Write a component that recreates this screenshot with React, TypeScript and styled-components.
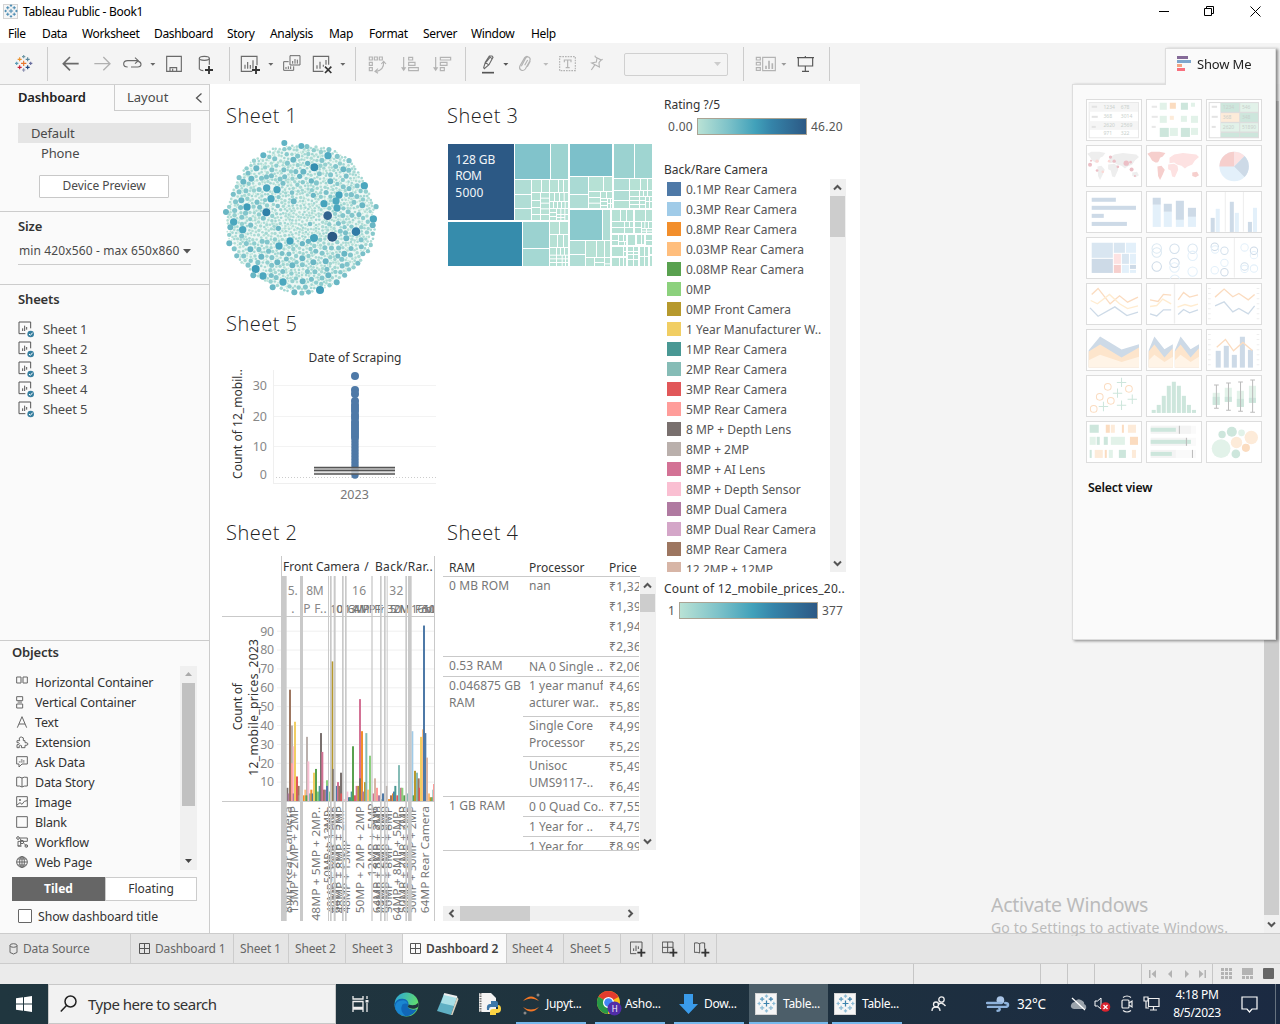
import React from 'react';
import styled, { createGlobalStyle, css } from 'styled-components';

const ui = `"Noto Sans", "Open Sans", sans-serif`;

const Global = createGlobalStyle`
  * { box-sizing: border-box; }
  body { margin: 0; background: #f4f4f4; font-family: ${ui}; overflow: hidden; }
  svg { display: block; flex: none; }
`;

/* ---------- window frame ---------- */

const Window = styled.div`
  width: 1280px; height: 1024px; display: flex; flex-direction: column;
  position: relative; overflow: hidden; background: #f4f4f4; white-space: nowrap;
`;
const TitleBar = styled.header`
  height: 22px; background: #fff; display: flex; align-items: center; padding-left: 3px;
  font-size: 12px; letter-spacing: -0.3px; color: #000;
`;
const TitleText = styled.span`margin-left: 5px; flex: 1;`;
const MenuBar = styled.nav`
  height: 22px; margin-bottom: -1px; background: #fff; display: flex; align-items: center; padding-left: 8px;
  font-size: 12px; letter-spacing: -0.35px; color: #000;
`;
const MenuItem = styled.span<{ $w: number }>`width: ${p => p.$w}px;`;
const Toolbar = styled.div`height: 41px; background: #f4f4f4; display: flex;`;
const ToolGroup = styled.div<{ $w: number }>`
  width: ${p => p.$w}px; height: 41px; display: flex; align-items: center; position: relative;
  &::after { content: ''; position: absolute; right: 0; top: 4px; width: 1px; height: 34px; background: #ccc; }
`;
const ToolSvg = styled.svg<{ $gap: number }>`margin-left: ${p => p.$gap / 3}px;`;
const FontSelect = styled.div`
  width: 104px; height: 23px; margin: 1px 0 0 21px; border: 1px solid #d0d0d0; border-radius: 2px;
  display: flex; align-items: center; justify-content: flex-end; padding-right: 5px;
`;

function Tool({ gap, x, w, children, c = '#6a6a6a' }: { gap: number; x: number; w: number; children: React.ReactNode; c?: string }) {
  return (
    <ToolSvg $gap={gap} width={w / 3} height={41} viewBox={`${x} 129 ${w} 123`} overflow="visible" fill="none" stroke={c} strokeWidth={3.4}>
      {children}
    </ToolSvg>
  );
}
function Caret({ gap, c = '#666' }: { gap: number; c?: string }) {
  return <Tool gap={gap} x={0} w={16} c="none"><path d="M1 189h15l-7.500 8z" fill={c} /></Tool>;
}

function Spark({ size, colors }: { size: number; colors: string[] }) {
  const pts = [[0, 0, 8], [0, -20, 4.5], [0, 20, 4.5], [-20, 0, 4.5], [20, 0, 4.5], [-12, -12, 6], [12, -12, 6], [-12, 12, 6], [12, 12, 6]];
  return (
    <svg width={size} height={size} viewBox="-26 -26 52 52" strokeWidth={3.4} fill="none">
      {pts.map(([x, y, r], i) => <path key={i} stroke={colors[i % colors.length]} d={`M${x - r} ${y}h${r * 2}M${x} ${y - r}v${r * 2}`} />)}
    </svg>
  );
}

const AppIcon = styled.div<{ $s: number }>`
  width: ${p => p.$s}px; height: ${p => p.$s}px; background: #f6f6f6; border: 1px solid #d4d4d4;
  display: flex; align-items: center; justify-content: center; flex: none;
`;
const WinButtons = styled.div`display: flex; gap: 35px; padding-right: 19px; height: 22px; align-items: center;`;

/* ---------- left panel ---------- */

const Body = styled.main`height: 849px; display: flex;`;
const Side = styled.aside`
  width: 210px; background: #fafafa; border-right: 1px solid #ccc; display: flex; flex-direction: column; flex: none;
  color: #4a4a4a; font-size: 12.5px; border-top: 1px solid #d0d0d0;
`;
const SideTabs = styled.div`height: 26px; display: flex;`;
const ActiveTab = styled.div`
  width: 114px; padding-left: 18px; line-height: 25px; font-weight: 600; font-size: 13px; letter-spacing: -0.15px; color: #222;
`;
const LayoutTab = styled.div`
  flex: 1; border-left: 1px solid #ccc; border-bottom: 1px solid #ccc; padding: 0 6px 0 12px; line-height: 25px;
  display: flex; justify-content: space-between; align-items: center; font-size: 13px;
`;
const DeviceBox = styled.div`height: 100px; padding: 12px 18px 0; `;
const Device = styled.div<{ $on?: boolean }>`
  height: 20px; line-height: 20px; font-size: 13px; letter-spacing: -0.15px;
  padding-left: ${p => (p.$on ? 13 : 23)}px; background: ${p => (p.$on ? '#e5e5e5' : 'transparent')};
`;
const PreviewButton = styled.div`
  margin: 12px 0 0 21px; width: 130px; height: 23px; border: 1px solid #c8c8c8; border-radius: 1px; background: #fff;
  text-align: center; line-height: 20px; font-size: 12px; letter-spacing: -0.05px;
`;
const Section = styled.section<{ $h: number }>`height: ${p => p.$h}px; border-top: 1px solid #ccc; padding: 4px 18px 0;`;
const Heading = styled.h3`margin: 0; font-size: 13px; line-height: 20px; font-weight: 600; letter-spacing: -0.15px; color: #333;`;
const SizePicker = styled.div`
  margin-top: 2px; height: 27px; line-height: 24px; border-bottom: 1px solid #ccc; font-size: 12px; letter-spacing: 0.12px; padding-left: 1px;
  display: flex; align-items: center; justify-content: space-between;
`;
const SheetList = styled.div`padding-top: 10px;`;
const SheetRow = styled.div`height: 20px; line-height: 20px; display: flex; align-items: center; gap: 8px; font-size: 13px; letter-spacing: -0.15px;`;
const Objects = styled.section`
  border-top: 1px solid #ccc; flex: 1; padding: 1px 12px 0;
`;
const ObjectsBody = styled.div`display: flex; height: 204px; justify-content: space-between; margin-top: 4px;`;
const ObjectRow = styled.div`height: 20px; display: flex; align-items: center; gap: 7px; padding-left: 4px; font-size: 12.5px; letter-spacing: -0.2px; color: #333;`;
const ObjectsList = styled.div`padding-top: 6px;`;
const Segments = styled.div`display: flex; height: 24px; margin-top: 7px; font-size: 12px; text-align: center; line-height: 22px; width: 185px; color: #333;`;
const SegOn = styled.div`width: 93px; background: #666; color: #fff; font-weight: 700; line-height: 24px;`;
const SegOff = styled.div`flex: 1; border: 1px solid #ccc; background: #fff;`;
const CheckRow = styled.div`display: flex; gap: 6px; align-items: center; height: 30px; padding-left: 6px; font-size: 12.3px; letter-spacing: -0.1px; color: #333;`;
const CheckBox = styled.span`width: 14px; height: 14px; border: 1px solid #666; border-radius: 1px; background: #fff;`;

/* ---------- scrollbars ---------- */

const Bar = styled.div<{ $w: number; $h: number; $row?: boolean }>`
  width: ${p => p.$w}px; height: ${p => p.$h}px; background: #f0f0f0; display: flex; flex: none;
  flex-direction: ${p => (p.$row ? 'row' : 'column')}; align-items: ${p => (p.$row ? 'center' : 'flex-start')}; justify-content: space-between;
`;
const Track = styled.div<{ $row?: boolean }>`
  flex: 1; display: flex; ${p => (p.$row ? css`height: 100%;` : css`width: 100%; flex-direction: column;`)}
`;
const Thumb = styled.div<{ $w: number; $h: number; $x?: number; $c?: string }>`
  width: ${p => p.$w}px; height: ${p => p.$h}px; margin-left: ${p => p.$x || 0}px; background: ${p => p.$c || '#cdcdcd'};
`;
function Chevron({ dir }: { dir: 'up' | 'down' | 'left' | 'right' }) {
  const r = { up: 0, right: 90, down: 180, left: 270 }[dir];
  const flat = dir === 'left' || dir === 'right';
  return (
    <svg width={flat ? 17 : 15} height={flat ? 15 : 17} viewBox={flat ? '-8.5 -7.5 17 15' : '-7.5 -8.5 15 17'}>
      <path transform={`rotate(${r})`} d="M-3.500 2L0-1.500L3.500 2" fill="none" stroke="#555" strokeWidth={2} />
    </svg>
  );
}

/* ---------- dashboard ---------- */

const Canvas = styled.div`width: 650px; background: #fff; display: flex; padding-left: 5px; flex: none;`;
const Col = styled.div<{ $w: number }>`width: ${p => p.$w}px; display: flex; flex-direction: column; flex: none;`;
const SheetTitle = styled.h2<{ $mt?: number; $x: number; $h?: number }>`
  margin: ${p => p.$mt || 0}px 0 0; padding-left: ${p => p.$x}px; height: ${p => p.$h || 30}px; line-height: ${p => (p.$h || 30) + 1}px;
  font-family: "Open Sans", ${ui}; font-weight: 300; font-size: 20px; letter-spacing: 0.5px; color: #222;
`;

let seed = 71;
const rnd = () => { seed = (seed * 1103515245 + 12345) % 2147483648; return seed / 2147483648; };
type Dot = [number, number, number, string];
const major: Dot[] = [
  [208, 39, 9, '#5fb3c4'], [145, 76, 9, '#5fb3c4'], [259, 48, 9, '#5fb3c4'], [339, 77, 11, '#4ea9c0'], [298, 112, 12, '#368fb0'],
  [155, 174, 11, '#4ba7be'], [186, 179, 11, '#45a3bc'], [168, 206, 11, '#4ba7be'], [96, 231, 11, '#3f9cb8'], [154, 247, 12, '#2f80a8'],
  [56, 276, 11, '#4ba7be'], [83, 299, 11, '#4ba7be'], [192, 348, 11, '#4ba7be'], [225, 333, 11, '#45a3bc'], [297, 324, 12, '#45a3bc'],
  [327, 221, 11, '#45a3bc'], [372, 195, 11, '#45a3bc'], [363, 213, 11, '#4ba7be'], [366, 234, 11, '#4ba7be'], [338, 257, 13, '#33638f'],
  [352, 320, 15, '#2c5985'], [423, 305, 13, '#2f7ba6'], [448, 167, 11, '#4ba7be'], [475, 267, 11, '#4ba7be'], [122, 417, 12, '#3f9cb8'],
  [144, 438, 11, '#4ba7be'], [204, 456, 11, '#4ba7be'], [315, 480, 12, '#3f9cb8'], [289, 153, 8, '#68b6c4'], [346, 154, 9, '#68b6c4'],
  [236, 214, 9, '#68b6c4'], [265, 125, 9, '#68b6c4'], [254, 139, 8, '#68b6c4'], [235, 89, 9, '#68b6c4'], [278, 100, 8, '#68b6c4'],
  [85, 155, 9, '#68b6c4'], [109, 146, 9, '#68b6c4'], [124, 115, 9, '#68b6c4'], [385, 118, 9, '#68b6c4'], [409, 194, 8, '#7cc1c9'],
  [43, 340, 9, '#68b6c4'], [106, 358, 9, '#68b6c4'], [139, 380, 9, '#68b6c4'], [187, 397, 9, '#68b6c4'], [232, 406, 9, '#68b6c4'],
  [262, 385, 9, '#68b6c4'], [295, 397, 9, '#68b6c4'], [332, 394, 9, '#68b6c4'], [388, 371, 9, '#68b6c4'], [340, 436, 9, '#68b6c4'],
  [263, 454, 9, '#68b6c4'], [238, 487, 9, '#68b6c4'], [173, 472, 9, '#68b6c4'], [115, 436, 9, '#68b6c4'], [365, 457, 9, '#68b6c4'],
  [33, 246, 9, '#68b6c4'], [46, 292, 9, '#68b6c4'], [79, 211, 9, '#68b6c4'], [394, 325, 9, '#68b6c4'], [442, 226, 9, '#68b6c4'],
  [483, 230, 8, '#7cc1c9'], [473, 286, 9, '#68b6c4'], [402, 92, 8, '#7cc1c9'], [262, 341, 8, '#68b6c4'], [280, 334, 8, '#68b6c4'],
  [190, 295, 8, '#68b6c4'], [295, 196, 8, '#68b6c4'], [231, 188, 7, '#7cc1c9'], [285, 282, 7, '#7cc1c9'], [188, 228, 7, '#7cc1c9'],
];
const dots: Dot[] = (() => {
  const out = [...major];
  const fill = (tries: number, r: number, inner: number, cols: string[]) => {
    for (let i = 0; i < tries; i++) {
      const a = rnd() * Math.PI * 2;
      const edge = 222 + Math.sin(a * 5) * 4;
      const d = Math.sqrt(inner * inner + rnd() * (edge * edge - inner * inner));
      const x = 257 + Math.cos(a) * d, y = 264 + Math.sin(a) * d;
      if (out.every(o => (o[0] - x) ** 2 + (o[1] - y) ** 2 > (o[2] + r - 0.4) ** 2)) out.push([x, y, r, cols[Math.floor(rnd() * cols.length)]]);
    }
  };
  fill(210, 7.6, 100, ['#78bfc8', '#81c5cb']);
  fill(260, 6.6, 85, ['#8dcdce', '#94d0cf', '#86c9cc']);
  fill(550, 5.2, 60, ['#a0d6d2', '#a8dad4']);
  fill(9000, 4, 0, ['#aadbd5', '#b2ded6', '#a2d7d3']);
  fill(9000, 2.8, 0, ['#bde5da', '#c6e9de']);
  return out;
})();

function Bubbles() {
  return (
    <svg width={225} height={180} viewBox="0 0 675 540">
      <circle cx={257} cy={264} r={216} fill="#edf7f4" />
      {dots.map(([x, y, r, c], i) => <circle key={i} cx={x} cy={y} r={r} fill={c} />)}
    </svg>
  );
}

type Box = [number, number, number, number, string?];
const L = '#b6e1d5', M = '#b0ddd5';
const tiles: Box[] = [
  [24, 42, 222, 270, '#2c5985'], [24, 276, 246, 408, '#368cac'], [225, 42, 330, 147, '#81c3cb'], [333, 42, 384, 147, '#9dd3d0'],
  [390, 42, 516, 138, '#7cc0ca'], [522, 42, 582, 144, '#9bd2d0'], [585, 42, 636, 144, '#9fd5d1'], [249, 276, 327, 354, '#9bd2d0'],
  [249, 357, 327, 408, '#a5d8d3'], [390, 240, 486, 330, '#8ac9cd'], [489, 240, 510, 330, M], [225, 150, 273, 192, M], [225, 195, 273, 234, M],
  [225, 237, 273, 270, M], [390, 141, 444, 192, '#aadad4'], [390, 195, 444, 234, M], [447, 141, 489, 183, L], [492, 141, 516, 183, L],
  [522, 147, 567, 180, M], [522, 183, 567, 210, M], [522, 213, 567, 234, L], [390, 333, 435, 372, M], [390, 375, 435, 408, M],
  [438, 333, 468, 381, L], [471, 333, 492, 381, L], [495, 333, 510, 381, L], [276, 150, 303, 186], [306, 150, 327, 186], [330, 150, 354, 186], [357, 150, 369, 186], [372, 150, 384, 186],
  [276, 189, 300, 210], [276, 213, 300, 231], [276, 234, 300, 252], [276, 255, 300, 270],
  [303, 189, 327, 203], [303, 206, 327, 218], [303, 221, 327, 235], [303, 238, 327, 252], [303, 255, 327, 270],
  [330, 189, 342, 213], [345, 189, 357, 213], [360, 189, 371, 213], [374, 189, 384, 213],
  [330, 216, 339, 234], [342, 216, 351, 234], [354, 216, 363, 234], [366, 216, 374, 234], [377, 216, 384, 234],
  [330, 237, 348, 246], [330, 249, 348, 258], [330, 261, 348, 270], [351, 237, 361, 252], [364, 237, 373, 252], [376, 237, 384, 252],
  [351, 255, 361, 261], [351, 264, 361, 270], [364, 255, 373, 261], [364, 264, 373, 270], [376, 255, 384, 270],
  [330, 276, 357, 312], [360, 276, 384, 312], [330, 315, 351, 351], [354, 315, 369, 351], [372, 315, 384, 351],
  [330, 354, 348, 374], [351, 354, 360, 374], [363, 354, 372, 374], [375, 354, 384, 374],
  [330, 377, 348, 385], [330, 388, 348, 396], [330, 399, 348, 408], [351, 377, 365, 385], [351, 388, 365, 396], [351, 399, 365, 408],
  [368, 377, 375, 385], [378, 377, 384, 385], [368, 388, 375, 396], [378, 388, 384, 396], [368, 399, 375, 408], [378, 399, 384, 408],
  [447, 186, 480, 201], [447, 204, 480, 218], [447, 221, 480, 234], [483, 186, 498, 204], [501, 186, 516, 204],
  [483, 207, 501, 213], [483, 216, 501, 225], [483, 228, 501, 234], [504, 207, 510, 219], [504, 222, 510, 234], [513, 207, 516, 219], [513, 222, 516, 234],
  [570, 147, 600, 180], [603, 147, 621, 180], [624, 147, 636, 180], [570, 183, 597, 198], [570, 201, 597, 210], [570, 213, 597, 222], [570, 225, 597, 234],
  [600, 183, 609, 198], [612, 183, 621, 198], [624, 183, 636, 198], [600, 201, 615, 210], [600, 213, 615, 222], [600, 225, 615, 234],
  [618, 201, 627, 213], [630, 201, 636, 213], [618, 216, 627, 234], [630, 216, 636, 234],
  [438, 384, 462, 408], [465, 384, 492, 396], [465, 399, 492, 408], [495, 384, 510, 400], [495, 403, 510, 408],
  [516, 240, 540, 273], [543, 240, 558, 273], [561, 240, 579, 273], [516, 276, 552, 291], [516, 294, 552, 309], [555, 276, 567, 291], [570, 276, 579, 291], [555, 294, 579, 309],
  [585, 240, 615, 273], [618, 240, 636, 273], [585, 276, 603, 291], [585, 294, 603, 309], [606, 276, 613, 294], [616, 276, 624, 294], [627, 276, 636, 294], [606, 297, 618, 302], [621, 297, 636, 302], [606, 305, 618, 309], [621, 305, 636, 309],
  [516, 315, 534, 330], [516, 333, 534, 345], [537, 315, 549, 333], [552, 315, 558, 333], [537, 336, 552, 345], [555, 336, 558, 345],
  [564, 315, 585, 345], [591, 315, 603, 342], [606, 315, 612, 342], [618, 315, 636, 330], [618, 333, 636, 345],
  [516, 351, 549, 378], [552, 351, 558, 363], [552, 366, 558, 378], [564, 351, 579, 363], [564, 366, 579, 372], [582, 351, 594, 363], [582, 366, 594, 372], [564, 375, 579, 387],
  [600, 351, 612, 378], [615, 351, 624, 378], [630, 351, 636, 372], [516, 384, 537, 408], [540, 384, 549, 408], [552, 384, 558, 408],
  [564, 390, 579, 408], [582, 375, 594, 387], [582, 390, 594, 408], [600, 381, 612, 408], [615, 381, 624, 408], [630, 378, 636, 408],
];
function Treemap() {
  return (
    <svg width={220} height={145} viewBox="0 0 660 435">
      {tiles.map(([x, y, a, b, c], i) => <rect key={i} x={x} y={y} width={a - x} height={b - y} fill={c || L} />)}
      <g fill="#f2f6f9" fontSize={36} fontFamily={ui}>
        <text x={46} y={102} textLength={120}>128 GB</text><text x={46} y={150} textLength={80}>ROM</text><text x={46} y={200} textLength={84}>5000</text>
      </g>
    </svg>
  );
}

const strip = [376, 390, 394, 401, 405, 408, 411, 415, 418, 422, 425, 428, 431, 434, 437, 440, 443, 446, 449, 452, 455, 458, 461, 464, 467, 470, 472, 475];
function BoxPlot() {
  return (
    <svg width={225} height={181} viewBox="215 336 225 181" fontFamily={ui}>
      <text x={355} y={362} textAnchor="middle" fontSize={12} fill="#333" textLength={93}>Date of Scraping</text>
      {[385.5, 416.5, 446.5].map(y => <path key={y} d={`M273 ${y}h163`} stroke="#f3f3f3" />)}
      <path d="M273 477.500h163" stroke="#ccc" strokeDasharray="1 2" />
      <path d="M273 483.500h163M273.500 370v114" stroke="#efefef" />
      {[['30', 385], ['20', 416], ['10', 446], ['0', 474]].map(([t, y]) => <text key={t} x={267} y={+y + 4.5} textAnchor="end" fontSize={12.5} fill="#888">{t}</text>)}
      <g fill="#4e79a7">{strip.map(y => <circle key={y} cx={355} cy={y} r={y < 440 ? 4 : 3.7} />)}</g>
      <rect x={314} y={468} width={81} height={3} fill="#bbb" opacity={0.8} />
      <rect x={314} y={471} width={81} height={3} fill="#ddd" opacity={0.8} />
      <path d="M314 467.500h81M314 470.500h81M314 474h81" stroke="#555" strokeWidth={1.3} />
      <text x={354.5} y={499} textAnchor="middle" fontSize={12.5} fill="#777">2023</text>
      <text transform="translate(242 424) rotate(-90)" textAnchor="middle" fontSize={12} fill="#333" textLength={110}>Count of 12_mobil..</text>
    </svg>
  );
}

const bars: [number, number, string][] = [
  [217, 7, '#79706e'], [221, 4, '#b07aa1'], [225, 59, '#9d7660'], [231, 40, '#bab0ac'], [231, 20, '#ff9d9a'], [236, 29, '#fabfd2'], [236, 4, '#b07aa1'], [240, 42, '#f1ce63'], [246, 13, '#e15759'], [251, 8, '#9d7660'], [254, 3, '#bab0ac'],
  [267, 3, '#f28e2b'], [271, 6, '#ffbe7d'], [276, 34, '#bab0ac'], [280, 21, '#fabfd2'], [274, 3, '#59a14f'], [285, 4, '#86bcb6'], [289, 6, '#f28e2b'], [293, 4, '#4e79a7'], [297, 15, '#f1ce63'], [303, 17, '#59a14f'], [309, 5, '#8cd17d'], [314, 8, '#499894'], [318, 36, '#79706e'], [322, 26, '#d37295'], [327, 6, '#9d7660'], [332, 6, '#b07aa1'], [336, 11, '#8cd17d'], [336, 8, '#4e79a7'], [344, 5, '#8cd17d'],
  [352, 74, '#b6992d'], [355, 17, '#79706e'], [365, 8, '#4e79a7'], [369, 10, '#d37295'], [373, 8, '#9d7660'], [378, 15, '#79706e'], [379, 4, '#e15759'], [388, 1, '#fabfd2'],
  [397, 5, '#fabfd2'], [402, 2, '#4e79a7'], [406, 2, '#59a14f'], [410, 5, '#499894'], [414, 29, '#59a14f'], [420, 3, '#e15759'], [425, 8, '#d37295'], [430, 8, '#b6992d'], [435, 54, '#d37295'], [435, 12, '#79706e'], [441, 37, '#f28e2b'], [445, 5, '#b07aa1'], [450, 10, '#b6992d'], [454, 36, '#86bcb6'], [459, 6, '#ffbe7d'], [465, 24, '#8cd17d'],
  [475, 4, '#d37295'], [480, 12, '#d7b5a6'], [486, 7, '#ff9d9a'], [492, 3, '#b07aa1'], [498, 1, '#499894'], [504, 4, '#4e79a7'], [515, 8, '#bab0ac'], [522, 1, '#f28e2b'], [528, 3, '#9d7660'], [534, 4, '#f28e2b'], [537, 5, '#4e79a7'], [541, 8, '#499894'], [547, 3, '#e15759'], [552, 19, '#86bcb6'], [558, 7, '#d37295'], [562, 7, '#8cd17d'], [568, 3, '#59a14f'], [574, 3, '#bab0ac'], [577, 4, '#86bcb6'],
  [592, 37, '#a0cbe8'], [596, 3, '#59a14f'], [600, 16, '#b6992d'], [606, 15, '#86bcb6'], [611, 12, '#9d7660'], [614, 7, '#e15759'], [618, 34, '#f1ce63'], [624, 38, '#ffbe7d'], [627, 93, '#4e79a7'], [631, 36, '#4e79a7'], [636, 23, '#d7b5a6'], [642, 4, '#ffbe7d'], [647, 2, '#b6992d'], [652, 2, '#59a14f'], [655, 6, '#86bcb6'], [657, 9, '#ff9d9a'],
];
const panes: [number, number][] = [[198, 17], [255, 9], [339, 3], [345, 5], [356, 6], [381, 5], [390, 5], [469, 4], [495, 5], [507, 5], [515, 3], [571, 5], [579, 11], [657, 3]];
const vlabels: [number, string, number?][] = [
  [213, '5MP Rear Camera'], [230, '8MP Rear Camera'], [249, '13MP + 2MP + 2MP'], [316, '48MP + 5MP + 2MP..'], [350, '50MP + 13MP', 1030], [361, '48MP + 12MP + 5MP'], [376, '64MP + 8MP + 5MP'],
  [388, '48MP + 8MP + 2MP'], [406, '48MP + 13MP'], [446, '50MP + 2MP + 2MP'], [482, '12MP + 5MP', 1010], [497, '64MP + 8MP + 2MP'], [506, '48MP + 2MP + 8MP'], [522, '64MP + 5MP + 2MP'], [531, '50MP + 8MP + 8MP'], [557, '64MP + 8MP + 5MP..'],
  [577, '50MP + 2MP + 2MP'], [588, '64MP + 8MP + 2MP'], [602, '50MP + 50MP + 2MP'], [642, '64MP Rear Camera'],
];
const Y0 = 783;
function CameraBars() {
  return (
    <svg width={225} height={383} viewBox="0 21 675 1149" fontFamily={ui}>
      <clipPath id="plot"><rect x={198} y={786} width={461} height={357} /></clipPath>
      {[10, 20, 30, 40, 50, 60, 70, 80, 90].map(v => (
        <g key={v}>
          <path d={`M186 ${Y0 - v * 5.66}H658`} stroke="#efefef" strokeWidth={3} />
          <text x={177} y={Y0 - v * 5.66 + 13} textAnchor="end" fontSize={37} fill="#888" textLength={41}>{v}</text>
        </g>
      ))}
      <g fill="#333" fontSize={36}>
        <text x={204} y={94} textLength={230}>Front Camera</text><text x={448} y={94}>/</text><text x={480} y={94} textLength={173}>Back/Rar..</text>
      </g>
      {bars.map(([x, v, c], i) => <rect key={i} x={x - 3} y={Y0 - v * 5.66} width={6} height={v * 5.66} fill={c} />)}
      <g fill="#888" fontSize={36}>
        <text x={218} y={164}>5.</text><text x={229} y={220}>.</text><text x={274} y={164} textLength={52}>8M</text><text x={265} y={219} textLength={70}>P F..</text>
        <text x={411} y={164} textLength={42}>16</text><text x={523} y={164} textLength={42}>32</text>
      </g>
      <svg x={342} y={100} width={316} height={130} viewBox="342 100 316 130" fill="#777" fontSize={34}>
        <text x={345} y={218} textLength={40}>10</text><text x={364} y={218}>0</text><text x={388} y={218} textLength={76}>13MP</text><text x={398} y={218} textLength={106}>64MP F</text>
        <text x={478} y={218}>Fr</text><text x={515} y={218} textLength={70}>32M</text><text x={524} y={218} textLength={60}>50M</text><text x={588} y={218} textLength={90}>16MP</text><text x={600} y={218}>Fron</text><text x={622} y={218}>50MP</text>
      </svg>
      <g clipPath="url(#plot)" fill="#777" fontSize={35}>
        {vlabels.map(([x, t, end], i) => <text key={i} transform={`translate(${x} ${end || (t.endsWith('..') ? 1142 : 1120)}) rotate(-90)`} textLength={t.length > 12 ? (t.endsWith('..') ? 342 : 322) : 220} lengthAdjust="spacingAndGlyphs">{t}</text>)}
      </g>
      <g fill="#c9c9c9">{panes.map(([x, w]) => <rect key={x} x={x} y={108} width={w} height={1035} />)}</g>
      <path d="M199.500 48V110M658.500 48V110M21 229.500H659M21 784.500H659" stroke="#c9c9c9" strokeWidth={3} />
      <text transform="translate(82 500) rotate(-90)" textAnchor="middle" fontSize={36} fill="#333" textLength={142}>Count of</text>
      <text transform="translate(128 502) rotate(-90)" textAnchor="middle" fontSize={36} fill="#333" textLength={410}>12_mobile_prices_2023</text>
    </svg>
  );
}

/* Sheet 4 text table */
const TableHead = styled.div`
  margin: 8px 0 0 3px; width: 197px; height: 22px; display: flex; line-height: 25px; border-bottom: 1px solid #c9c9c9;
  font-size: 12px; letter-spacing: 0; color: #333;
`;
const HeadCell = styled.span<{ $w: number }>`width: ${p => p.$w}px; padding-left: 6px;`;
const TableArea = styled.div`display: flex; margin-left: 3px; height: 273px;`;
const TableBody = styled.div`width: 196px; height: 274px; overflow: hidden; border-bottom: 1px solid #c9c9c9; margin-right: 1px; font-size: 12px; letter-spacing: 0.02px; color: #777;`;
const RamGroup = styled.div`display: flex; border-bottom: 1px solid #c9c9c9; width: 200px;`;
const RamCell = styled.div`width: 80px; padding-left: 6px; line-height: 17px; white-space: pre; letter-spacing: 0.1px;`;
const ProcGroup = styled.div`display: flex; border-bottom: 1px solid #c9c9c9; &:last-child { border-bottom: 0; }`;
const ProcCell = styled.div<{ $one?: boolean }>`width: 80px; padding-left: 6px; line-height: ${p => (p.$one ? 19 : 17)}px; white-space: pre; overflow: hidden;`;
const PriceCell = styled.div`height: 20px; line-height: 20px; padding-left: 6px; letter-spacing: 0.3px; &:last-child { height: 19px; }`;
const table: [string, [string, string[]][]][] = [
  ['0 MB ROM', [['nan', ['₹1,32', '₹1,39', '₹1,94', '₹2,36']]]],
  ['0.53 RAM', [['NA 0 Single ..', ['₹2,06']]]],
  ['0.046875 GB\nRAM', [['1 year manuf\nacturer war..', ['₹4,69', '₹5,89']], ['Single Core\nProcessor', ['₹4,99', '₹5,29']], ['Unisoc\nUMS9117-..', ['₹5,49', '₹6,49']]]],
  ['1 GB RAM', [['0 0 Quad Co..', ['₹7,55']], ['1 Year for ..', ['₹4,79']], ['1 Year for', ['₹8,99']]]],
];
const HBarWrap = styled.div`margin: 56px 0 0 3px;`;

/* Legends */
const LegendTitle = styled.div<{ $mt: number; $ls?: number }>`
  margin-top: ${p => p.$mt}px; padding-left: 4px; height: 18px; line-height: 18px; font-size: 12px; letter-spacing: ${p => p.$ls || 0}px; color: #333;
`;
const Ramp = styled.div<{ $x: number; $w: number; $mt: number; $ls: number }>`
  display: flex; align-items: center; gap: 4px; height: 17px; margin-top: ${p => p.$mt}px; padding-left: ${p => p.$x}px; font-size: 12px; color: #555;
  letter-spacing: ${p => p.$ls}px;
  i { width: ${p => p.$w}px; height: 17px; border: 1px solid #aaa393; background: linear-gradient(90deg, #b9e2d5, #7dc2c9 28%, #41a1ba 53%, #3584a9 68%, #2c5985); }
`;
const LegendArea = styled.div`display: flex; height: 393px; width: 186px; justify-content: space-between; overflow: hidden;`;
const LegendRow = styled.div`
  height: 20px; display: flex; align-items: center; gap: 5px; padding-left: 7px; font-size: 12px; color: #555;
`;
const Swatch = styled.span<{ $c: string }>`width: 14px; height: 14px; background: ${p => p.$c}; flex: none;`;
const LegendList = styled.div`overflow: hidden;`;
const cameras: [string, string][] = [
  ['#4e79a7', '0.1MP Rear Camera'], ['#a0cbe8', '0.3MP Rear Camera'], ['#f28e2b', '0.8MP Rear Camera'], ['#ffbe7d', '0.03MP Rear Camera'], ['#59a14f', '0.08MP Rear Camera'],
  ['#8cd17d', '0MP'], ['#b6992d', '0MP Front Camera'], ['#f1ce63', '1 Year Manufacturer W..'], ['#499894', '1MP Rear Camera'], ['#86bcb6', '2MP Rear Camera'],
  ['#e15759', '3MP Rear Camera'], ['#ff9d9a', '5MP Rear Camera'], ['#79706e', '8 MP + Depth Lens'], ['#bab0ac', '8MP + 2MP'], ['#d37295', '8MP + AI Lens'],
  ['#fabfd2', '8MP + Depth Sensor'], ['#b07aa1', '8MP Dual Camera'], ['#d4a6c8', '8MP Dual Rear Camera'], ['#9d7660', '8MP Rear Camera'], ['#d7b5a6', '12.2MP + 12MP'],
];

/* ---------- workspace right of the dashboard ---------- */
const Gray = styled.div`flex: 1; background: #f4f4f4; display: flex; justify-content: flex-end;`;
const Watermark = styled.div`
  position: absolute; left: 991px; top: 891px; height: 45px; overflow: hidden; color: #bbb; font-size: 19.5px; letter-spacing: -0.25px; line-height: 27px;
  small { display: block; font-size: 14px; line-height: 20px; letter-spacing: 0.15px; }
`;
const ShowMe = styled.div`position: absolute; left: 1072px; top: 48px; width: 204px; filter: drop-shadow(2px 1px 1.5px rgba(0,0,0,.45));`;
const ShowMeTab = styled.div`
  margin-left: 93px; height: 37px; position: relative; z-index: 1; margin-bottom: -1px; background: #fafafa; border: 1px solid #ddd; border-bottom: 0;
  display: flex; align-items: center; padding: 0 0 7px 11px; gap: 6px; font-size: 13px; color: #222; letter-spacing: -0.15px;
`;
const ShowMeBody = styled.div`height: 556px; background: #fafafa; border: 1px solid #ddd; padding: 14px 13px;`;
const Thumbs = styled.div`display: grid; grid-template-columns: repeat(3, 56px); gap: 4px;`;
const ThumbCell = styled.div`height: 42px; width: 56px; background: #fff; border: 1px solid #ddd; svg { margin: -1px; }`;
const SelectView = styled.div`font-size: 12.3px; font-weight: 600; color: #111; margin: 16px 0 0 2px; letter-spacing: -0.2px;`;

const B1 = '#cddae7', B2 = '#e3f0fa', G1 = '#cde6dc', G2 = '#e2f2e9', O1 = '#fbdcc0', O2 = '#fdebd9', R1 = '#f6cfcd', R2 = '#fde2e2', Y1 = '#fff4e7';
const R = (l: (number | string)[][]) => l.map((r, i) => <rect key={i} x={r[0]} y={r[1]} width={r[2]} height={r[3]} fill={r[4] as string} />);
const C = (l: (number | string)[][]) => l.map((r, i) => <circle key={i} cx={r[0]} cy={r[1]} r={r[2]} stroke={r[3] as string} fill="none" strokeWidth={3} />);
const land = ['M4 26L16 20L40 20L58 24L50 34L42 38L38 48L34 52L28 52L18 46L12 36z', 'M34 64L46 62L56 74L50 88L42 104L36 92z', 'M66 58L84 56L94 62L96 74L86 96L78 94L74 76L66 72z', 'M70 38L84 28L110 24L150 28L158 36L146 46L138 58L124 64L116 70L106 62L92 58L84 52L70 54z', 'M138 82L152 80L158 90L148 96L138 92z'];
const tinyText = (x: number, y: number, s: string) => <text key={`${x}-${y}`} x={x} y={y} fontSize={15} fill="#c9d0cc" fontFamily={ui}>{s}</text>;
const thumbs: React.ReactNode[] = [
  <>{R([[8, 9, 150, 108, '#e8e8e8'], [11, 12, 144, 102, '#fff'], [11, 12, 144, 26, '#f5f5f5'], [11, 66, 144, 26, '#f5f5f5'], [17, 20, 16, 6, '#e3e3e3'], [17, 50, 18, 6, '#e3e3e3'], [17, 80, 12, 6, '#e3e3e3']])}{tinyText(52, 30, '1234')}{tinyText(104, 30, '678')}{tinyText(52, 57, '368')}{tinyText(104, 57, '3014')}{tinyText(52, 84, '2620')}{tinyText(104, 84, '2569')}{tinyText(52, 108, '971')}{tinyText(104, 108, '322')}</>,
  R([[17, 20, 16, 6, '#e8e8e8'], [17, 50, 18, 6, '#e8e8e8'], [17, 80, 12, 6, '#e8e8e8'], [41, 11, 21, 21, G2], [71, 11, 18, 18, O1], [104, 11, 21, 21, G1], [134, 11, 12, 12, G2], [41, 50, 21, 21, G2], [71, 50, 12, 12, O2], [104, 50, 18, 18, G2], [134, 50, 21, 21, G2], [41, 86, 27, 27, G1], [71, 86, 24, 24, G2], [104, 86, 27, 27, G1], [134, 86, 21, 21, G2]]),
  <>{R([[8, 9, 150, 108, '#ddd'], [11, 12, 32, 102, '#fff'], [17, 20, 16, 6, '#e3e3e3'], [17, 50, 18, 6, '#e3e3e3'], [17, 80, 12, 6, '#e3e3e3'], [44, 12, 55, 26, G1], [102, 12, 53, 26, G2], [44, 42, 55, 26, O2], [102, 42, 53, 26, G1], [44, 72, 55, 25, G2], [102, 72, 53, 25, G2], [44, 101, 55, 12, G1], [102, 101, 53, 12, G1]])}{tinyText(50, 30, '1234')}{tinyText(107, 30, '546')}{tinyText(50, 61, '368')}{tinyText(107, 61, '348')}{tinyText(50, 90, '2620')}{tinyText(107, 90, '51890')}</>,
  <><g fill="#eee">{land.map(d => <path key={d} d={d} />)}</g><g fill="#ecbfc6"><circle cx={12} cy={59} r={6} /><circle cx={15} cy={47} r={3} /><circle cx={73} cy={36} r={5} /><circle cx={84} cy={48} r={5} /><circle cx={95} cy={65} r={4} /><circle cx={120} cy={54} r={8} /><circle cx={133} cy={51} r={4} /><circle cx={136} cy={73} r={6} /><circle cx={33} cy={76} r={4} /><circle cx={146} cy={92} r={3} /></g><g fill="#fbd9d6"><circle cx={33} cy={48} r={5} /><circle cx={50} cy={80} r={4} /><circle cx={69} cy={48} r={4} /></g></>,
  <g>{land.map((d, i) => <path key={d} d={d} fill={i === 2 || i === 3 ? R2 : R1} />)}</g>,
  <><circle cx={84} cy={64} r={44} fill={B2} /><path d="M84 64H40A44 44 0 0 1 84 20z" fill={R1} /><path d="M84 64V20A44 44 0 0 1 115 33z" fill={R2} /><path d="M84 64L115 33A44 44 0 0 1 115 95z" fill={B1} /></>,
  R([[17, 20, 72, 12, B1], [17, 44, 132, 12, B1], [17, 68, 36, 12, B1], [17, 92, 105, 12, B1]]),
  R([[20, 20, 24, 21, B1], [20, 41, 24, 66, B2], [53, 38, 24, 24, B1], [53, 62, 24, 45, B2], [89, 29, 24, 57, B1], [89, 86, 24, 21, B2], [125, 50, 24, 27, B1], [125, 77, 24, 30, B2]]),
  R([[56, 3, 3, 118, '#eee'], [110, 3, 3, 118, '#eee'], [14, 80, 12, 42, B1], [29, 53, 12, 69, B2], [71, 32, 12, 90, B1], [86, 65, 12, 57, B2], [125, 92, 12, 30, B1], [140, 50, 12, 72, B2]]),
  R([[17, 17, 63, 45, '#d9e6f1'], [17, 65, 63, 42, B1], [83, 17, 33, 30, '#d9e6f1'], [119, 17, 30, 30, B2], [83, 50, 21, 30, R2], [83, 83, 21, 24, R1], [107, 50, 21, 30, '#d9e6f1'], [107, 83, 21, 24, B2], [131, 50, 18, 30, B2], [131, 83, 18, 12, B1], [131, 98, 18, 9, B2]]),
  C([[32, 34, 14, '#dbe8f2'], [32, 46, 14, '#dbe8f2'], [32, 88, 14, B1], [85, 35, 14, '#d3e0ec'], [85, 77, 14, B1], [85, 91, 14, B2], [139, 35, 14, '#d9e6f1'], [139, 56, 14, B2], [139, 103, 14, B2], [86, 127, 14, B2]]),
  <>{R([[83, 3, 3, 118, '#eee']])}{C([[26, 29, 11, B1], [27, 37, 11, B2], [55, 41, 11, '#d3e0ec'], [55, 77, 11, B2], [26, 99, 11, B2], [55, 105, 11, B1], [115, 31, 11, B2], [143, 41, 11, B1], [143, 54, 11, B2], [115, 88, 11, '#d3e0ec'], [115, 95, 11, B2], [143, 94, 11, B2]])}</>,
  <g fill="none" strokeWidth={4}><path d="M17 34L36 16L72 62L100 38L124 57L155 42" stroke={O1} /><path d="M14 52L34 62L70 34L100 62L124 76L155 68" stroke="#ffecd0" /><path d="M12 74L36 99L86 71L122 97L155 87" stroke={B1} /></g>,
  <g fill="none" strokeWidth={4}><path d="M85 3V121" stroke="#eee" /><path d="M12 50L36 55L52 34L75 36M96 50L112 28L130 42L155 35" stroke={O1} /><path d="M12 70L32 67L50 48L75 62M94 72L116 64L134 69L155 63" stroke="#ffecd0" /><path d="M12 92L32 98L52 80L75 80M96 94L112 79L130 89L155 80" stroke={B1} /></g>,
  <g fill="none" strokeWidth={4}><path d="M10 15V110M155 15V110" stroke="#eee" strokeWidth={8} strokeDasharray="3 12" /><path d="M27 42L54 18L80 41L98 31L126 50L145 34" stroke={O1} /><path d="M27 68L54 56L80 86L98 76L126 92L145 68" stroke={B1} /></g>,
  <><path d="M8 63L42 22L106 61L158 45V115H8z" fill={B1} /><path d="M8 67L42 46L106 85L158 55V115H8z" fill="#fde5cc" /><path d="M8 93L42 77L106 98L158 83V115H8z" fill={Y1} /></>,
  <>{[8, 86].map(x => <g key={x} transform={`translate(${x} 0)`}><path d="M0 63L17 22L47 60L72 45V115H0z" fill={B1} /><path d="M0 67L17 46L47 85L72 57V115H0z" fill="#fde5cc" /><path d="M0 93L17 77L47 98L72 83V115H0z" fill={Y1} /></g>)}</>,
  <>{R([[29, 65, 15, 50, B1], [53, 50, 15, 65, B1], [77, 77, 15, 38, B1], [101, 23, 15, 92, B1], [125, 62, 15, 53, B1]])}<path d="M10 15V115M155 15V115" stroke="#eee" strokeWidth={8} strokeDasharray="3 12" /><path d="M32 54L58 31L82 65L110 40L138 64" stroke={O1} fill="none" strokeWidth={4} /></>,
  <>{C([[65, 35, 10, O1], [128, 41, 10, O1], [41, 65, 10, O1], [74, 77, 10, O1], [23, 101, 10, O1]])}<path d="M92 22h28M106 8v28M80 54h28M94 40v28M124 72h28M138 58v28M38 94h28M52 80v28M92 90h28M106 76v28" stroke={G1} strokeWidth={3} /></>,
  R([[17, 104, 12, 9, G1], [32, 89, 12, 24, G1], [47, 62, 12, 51, G1], [62, 32, 12, 81, G1], [77, 20, 12, 93, G1], [92, 32, 12, 81, G1], [107, 62, 12, 51, G1], [122, 89, 12, 24, G1], [137, 104, 12, 9, G1]]),
  <>{R([[20, 53, 21, 36, G2], [20, 65, 21, 24, G1], [56, 38, 21, 42, G2], [56, 65, 21, 15, G1], [92, 47, 21, 48, G2], [92, 71, 21, 24, G1], [128, 32, 21, 51, G2], [128, 68, 21, 15, G1]])}<path d="M31 30V99M24 30h14M24 99h14M67 24V105M60 24h14M60 105h14M103 21V108M96 21h14M96 108h14M139 15V111M132 15h14M132 111h14" stroke="#bbb" strokeWidth={3} /></>,
  R([[11, 11, 27, 24, G1], [59, 11, 12, 24, O1], [74, 11, 12, 24, O2], [107, 11, 6, 24, O1], [125, 11, 24, 24, O2], [11, 47, 18, 24, G2], [32, 47, 9, 24, G1], [53, 47, 12, 24, G1], [74, 47, 42, 24, G2], [131, 47, 24, 24, O1], [11, 86, 6, 24, G1], [26, 86, 24, 24, O2], [56, 86, 6, 24, O1], [68, 86, 12, 24, G2], [98, 86, 21, 24, G1], [137, 86, 12, 24, O2]]),
  R([[14, 14, 135, 24, '#fafafa'], [14, 14, 120, 24, '#f4f4f4'], [14, 20, 75, 12, G1], [98, 14, 3, 24, '#bbb'], [14, 50, 135, 24, '#fafafa'], [14, 50, 110, 24, '#f4f4f4'], [14, 56, 120, 12, G1], [119, 50, 3, 24, '#bbb'], [14, 86, 135, 24, '#fafafa'], [14, 86, 75, 24, '#f4f4f4'], [14, 92, 63, 12, G1], [137, 86, 3, 24, '#bbb']]),
  <><circle cx={45} cy={82} r={28} fill={G2} /><circle cx={48} cy={40} r={11} fill={G1} /><circle cx={77} cy={32} r={15} fill={G1} /><circle cx={106} cy={35} r={10} fill={G2} /><circle cx={135} cy={49} r={20} fill={O2} /><circle cx={91} cy={64} r={17} fill={O2} /><circle cx={119} cy={80} r={12} fill={O1} /><circle cx={89} cy={98} r={13} fill={G1} /></>,
];

/* ---------- bottom ---------- */
const Tabs = styled.div`height: 31px; background: #e5e5e5; border-top: 1px solid #ccc; border-bottom: 1px solid #ccc; display: flex; font-size: 12px; color: #666;`;
const Tab = styled.div<{ $w: number; $on?: boolean; $pad?: number }>`
  width: ${p => p.$w}px; border-right: 1px solid #ccc; display: flex; align-items: center; gap: 5px; padding-left: ${p => p.$pad ?? 6}px;
  letter-spacing: -0.15px; ${p => p.$on && css`background: #fafafa; font-weight: 600; color: #444; letter-spacing: -0.15px; padding-bottom: 1px;`}
`;
const Status = styled.div`height: 20px; background: #ebebeb; display: flex; justify-content: flex-end;`;
const StatusCell = styled.div<{ $w: number }>`width: ${p => p.$w}px; border-left: 1px solid #c6c6c6; display: flex; align-items: center;`;
const NavGlyphs = styled.div`display: flex; padding-left: 5px;`;
const Taskbar = styled.footer`height: 40px; background: linear-gradient(90deg, #20363f, #1f333e 50%, #1b2a42); display: flex; color: #fff; font-size: 12px;`;
const Start = styled.div`width: 48px; display: flex; align-items: center; padding-left: 16px;`;
const Search = styled.div`width: 288px; background: #f2f2f2; border: 1px solid #c8c8c8; display: flex; align-items: center; padding-left: 11px; gap: 11px; font-size: 15px; letter-spacing: -0.5px; color: #333;`;
const Pinned = styled.div<{ $w: number; $ml: number; $run?: boolean; $on?: boolean; $pad?: number; $gap?: number }>`
  width: ${p => p.$w}px; margin-left: ${p => p.$ml}px; display: flex; align-items: center; gap: ${p => p.$gap ?? 6}px; flex: none;
  padding-left: ${p => p.$pad || 0}px; padding-top: ${p => (p.$run ? 1 : 0)}px;
  ${p => p.$run && css`border-bottom: 2px solid #76b9ed;`} ${p => p.$on && css`background: #4c5e69;`}
  letter-spacing: -0.3px;
`;
const Weather = styled.span`font-size: 13.5px; letter-spacing: -0.2px;`;
const Clock = styled.div`width: 60px; margin-left: 7px; text-align: center; line-height: 18px; padding-top: 2px; letter-spacing: -0.3px;`;
const Peek = styled.div`width: 5px; border-left: 1px solid #66727f; margin-left: auto;`;

const sheetGlyph = (
  <svg width={17} height={17} viewBox="0 0 51 51" fill="none" stroke="#555" strokeWidth={3}>
    <path d="M38 22V3H3V38H22" /><path d="M14 22V30M20 14V30M26 18V26" /><circle cx={38} cy={39} r={10} fill="#377f9f" stroke="none" /><path d="M33 39l4 4l7-8" stroke="#fff" />
  </svg>
);
const gridGlyph = <svg width={11} height={11} viewBox="0 0 11 11" fill="none" stroke="#555"><path d="M.5.5h10v10H.5zM5.500.5v10M.5 5.500h10" /></svg>;
const O = ({ children }: { children: React.ReactNode }) => <svg width={12} height={12} viewBox="0 0 36 36" fill="none" stroke="#666" strokeWidth={3} overflow="visible">{children}</svg>;
const objects: [string, React.ReactNode][] = [
  ['Horizontal Container', <O><path d="M2 3h13v18H2zM21 3h13v18H21z" /><path d="M13 7h10v12H13z" fill="#aaa" stroke="none" /></O>],
  ['Vertical Container', <O><path d="M2 2h18v12H2zM2 24h18v12H2z" /><path d="M5 15h13v9H5z" fill="#aaa" stroke="none" /></O>],
  ['Text', <O><path d="M4 35L18 2L32 35M9 24H27" /></O>],
  ['Extension', <O><path d="M3 14h8q-4-11 5-11t6 11h5v6q9-1 9 4t-9 4v7H16q3-8-3-7t-3 7H3V26q7 1 7-3t-7-3z" /></O>],
  ['Ask Data', <O><path d="M2 2h32v22H18l-9 9v-9H2z" /><path d="M11 20v-5M17 20V9M23 20v-8" stroke="#aaa" strokeWidth={5} /></O>],
  ['Data Story', <O><path d="M2 4q10-2 16 2q6-4 16-2v26q-10-1-16 3q-6-4-16-3zM18 6v27" /></O>],
  ['Image', <O><path d="M2 2h32v30H2zM3 27l9-7l6 5l7-9l8-2" /><circle cx={12} cy={12} r={2} /></O>],
  ['Blank', <O><path d="M2 2h32v32H2z" /></O>],
  ['Workflow', <O><circle cx={6} cy={6} r={4} /><path d="M10 6H34V16H6v14h9" /><circle cx={18} cy={18} r={5} /><path d="M14 8v20M24 22l9 10" /><circle cx={31} cy={30} r={4} /><path d="M5 30h12" /></O>],
  ['Web Page', <O><circle cx={18} cy={18} r={16} /><ellipse cx={18} cy={18} rx={7} ry={16} /><path d="M2 18H34M18 2V34M5 9h26M5 27h26" /></O>],
];
const plus = (x: number, y: number) => <path d={`M${x - 12} ${y}h24M${x} ${y - 12}v24`} stroke="#333" strokeWidth={5.5} />;
const tableauBlue = ['#3d83ad', '#8bbcd6', '#8bbcd6', '#8bbcd6', '#8bbcd6', '#5b9cc0'];
const nav = (d: string) => <svg width={16} height={12} viewBox="0 0 16 12"><path d={d} fill="#b3b3b3" /></svg>;
const logoCrosses: [number, number, number, string][] = [[0, 0, 8, '#e8762d'], [0, -20, 5, '#7199a6'], [0, 20, 5, '#8a8fb0'], [-21, 0, 5, '#5b9bb5'], [21, 0, 5, '#6a6fa0'], [-12, -12, 6, '#eb912c'], [12, -12, 6, '#59879b'], [-12, 12, 6, '#c72035'], [12, 12, 6, '#1f457e']];
const menus: [string, number][] = [['File', 34], ['Data', 40], ['Worksheet', 72], ['Dashboard', 73], ['Story', 43], ['Analysis', 59], ['Map', 40], ['Format', 54], ['Server', 48], ['Window', 60], ['Help', 40]];

export default function App() {
  return (
    <Window>
      <Global />
      <TitleBar>
        <AppIcon $s={15}><Spark size={14} colors={['#3d83ad']} /></AppIcon>
        <TitleText>Tableau Public - Book1</TitleText>
        <WinButtons>
          <svg width={11} height={11}><path d="M1 5.500h10" stroke="#000" /></svg>
          <svg width={11} height={11} fill="none" stroke="#000"><path d="M.5 2.500h7v7h-7zM2.500 2.500v-2h7v7h-2" /></svg>
          <svg width={11} height={11} stroke="#000"><path d="M.5.5l10 10M10.500.5l-10 10" /></svg>
        </WinButtons>
      </TitleBar>
      <MenuBar>
        {menus.map(([t, w]) => <MenuItem key={t} $w={w}>{t}</MenuItem>)}
      </MenuBar>
      <Toolbar>
        <ToolGroup $w={48}>
          <Tool gap={45} x={0} w={52}><g transform="translate(26 190)">{logoCrosses.map(([x, y, r, c], i) => <path key={i} stroke={c} d={`M${x - r} ${y}h${2 * r}M${x} ${y - r}v${2 * r}`} />)}</g></Tool>
        </ToolGroup>
        <ToolGroup $w={182}>
          <Tool gap={44} x={187} w={48}><path d="M234 191H190M208 171L188 191L208 211" strokeWidth={5} /></Tool>
          <Tool gap={46} x={281} w={49} c="#b0b0b0"><path d="M282 191H327M309 171L329 191L309 211" strokeWidth={4} /></Tool>
          <Tool gap={38} x={368} w={56}><path d="M382 201q-12 0-12-9q0-10 12-10H412M404 173l10 9l-10 9M414 184q8 2 8 9q0 8-10 8H392" /></Tool>
          <Caret gap={25} />
          <Tool gap={33} x={498} w={48}><path d="M500 169H544V214H500zM510 214V203H530V214M518 206v6" /></Tool>
          <Tool gap={51} x={597} w={42}><ellipse cx={613} cy={175} rx={15} ry={6} /><path d="M598 175V207q4 5 12 5M628 175V194" />{plus(627, 210)}</Tool>
        </ToolGroup>
        <ToolGroup $w={126}>
          <Tool gap={33} x={723} w={57}><path d="M771 196V169H724V214H757M735 206v-12M743 206v-20M751 206v-11M759 206v-25" />{plus(768, 210)}</Tool>
          <Caret gap={24} />
          <Tool gap={29} x={848} w={53}><path d="M869 167H899V195H869zM865 185H850V211H880V199M857 207v-6M864 207v-8M871 207v-8M877 191v-8M884 191v-14M891 191v-12" strokeWidth={3} /></Tool>
          <Tool gap={38} x={939} w={57}><path d="M986 194V169H940V214H970M951 206v-10M960 206v-21M970 200v-6M978 194v-14" /><path d="M975 200l19 19M994 200l-19 19" stroke="#333" strokeWidth={5} /></Tool>
          <Caret gap={24} />
        </ToolGroup>
        <ToolGroup $w={110}>
          <Tool gap={40} x={1107} w={51} c="#b3b3b3"><path d="M1108 171h9v9h-9zM1123 171h9v9h-9zM1138 171h9v9h-9zM1108 187h9v9h-9zM1108 203h9v9h-9zM1151 186q1 24-22 28M1144 192l7-8l7 8M1134 206l-9 8l9 6" /></Tool>
          <Tool gap={45} x={1203} w={54} c="#b3b3b3"><path d="M1211 171V208" /><path d="M1203 202h16l-8 12z" fill="#b3b3b3" stroke="none" /><path d="M1226 172h12v8h-12zM1226 187h19v9h-19zM1226 203h29v9h-29z" /></Tool>
          <Tool gap={42} x={69} w={55} c="#b3b3b3"><path d="M77 171V208" /><path d="M69 202h16l-8 12z" fill="#b3b3b3" stroke="none" /><path d="M91 172h31v8H91zM91 187h20v9H91zM91 203h12v9H91z" /></Tool>
        </ToolGroup>
        <ToolGroup $w={278}>
          <Tool gap={48} x={216} w={36}><path d="M221 203l5-16l12-19h8l3 4l-12 22l-14 12zM226 187l9 7M238 170l8 6M229 186l12-15" /><path d="M216 218h36" stroke="#555" strokeWidth={5} /></Tool>
          <Caret gap={26} c="#555" />
          <Tool gap={32} x={327} w={36} c="#b3b3b3"><path d="M334 199l12-23q5-8 11-4t2 12l-13 23q-6 7-13 3t-3-13l14-24q5-6 10-3M344 196l9-16M352 200l9-17" /></Tool>
          <Caret gap={36} c="#bbb" />
          <Tool gap={32} x={447} w={50} c="#b3b3b3"><path d="M449 170H496V212H449z" strokeDasharray="5 3" /><path d="M463 187v-7h20v7M473 180v23M467 203h12" /></Tool>
          <Tool gap={48} x={545} w={35} c="#b3b3b3"><path d="M558 171l18 9l4-2M558 171l-1-4M563 174l-2 12l-14 3l23 12l-1-13l7-9M557 194l-11 16" /></Tool>
          <FontSelect><svg width={8} height={5}><path d="M0 0h7l-3.500 4z" fill="#ccc" /></svg></FontSelect>
        </ToolGroup>
        <ToolGroup $w={86}>
          <Tool gap={36} x={1038} w={60} c="#b3b3b3"><path d="M1039 172h12v8h-12zM1039 187h12v8h-12zM1039 203h12v8h-12zM1058 172h38v40h-38z" /><path d="M1068 207v-10M1077 207v-25M1087 207v-17" strokeWidth={5} /></Tool>
          <Caret gap={15} c="#999" />
          <Tool gap={32} x={1161} w={51} c="#555"><path d="M1161 173h51M1186 168v5M1165 173V198H1208V173M1186 198V214M1176 214h21" /></Tool>
        </ToolGroup>
      </Toolbar>

      <Body>
        <Side>
          <SideTabs>
            <ActiveTab>Dashboard</ActiveTab>
            <LayoutTab>Layout<svg width={8} height={10} viewBox="0 0 8 10"><path d="M6.500.5L1.500 5L6.500 9.500" fill="none" stroke="#555" strokeWidth={1.3} /></svg></LayoutTab>
          </SideTabs>
          <DeviceBox>
            <Device $on>Default</Device>
            <Device>Phone</Device>
            <PreviewButton>Device Preview</PreviewButton>
          </DeviceBox>
          <Section $h={73}>
            <Heading>Size</Heading>
            <SizePicker>min 420x560 - max 650x860<svg width={8} height={5}><path d="M0 0h8l-4 4.500z" fill="#555" /></svg></SizePicker>
          </Section>
          <Section $h={356}>
            <Heading>Sheets</Heading>
            <SheetList>{[1, 2, 3, 4, 5].map(n => <SheetRow key={n}>{sheetGlyph}Sheet {n}</SheetRow>)}</SheetList>
          </Section>
          <Objects>
            <Heading>Objects</Heading>
            <ObjectsBody>
              <ObjectsList>{objects.map(([t, g]) => <ObjectRow key={t}>{g}{t}</ObjectRow>)}</ObjectsList>
              <Bar $w={17} $h={204}>
                <svg width={17} height={17}><path d="M5 10h7l-3.500-4z" fill="#aaa" /></svg>
                <Track><Thumb $w={13} $h={123} $x={2} $c="#c1c1c1" /></Track>
                <svg width={17} height={17}><path d="M5 6h7l-3.500 4z" fill="#444" /></svg>
              </Bar>
            </ObjectsBody>
            <Segments><SegOn>Tiled</SegOn><SegOff>Floating</SegOff></Segments>
            <CheckRow><CheckBox />Show dashboard title</CheckRow>
          </Objects>
        </Side>

        <Canvas>
          <Col $w={225}>
            <SheetTitle $mt={16} $x={11}>Sheet 1</SheetTitle>
            <Bubbles />
            <SheetTitle $x={11} $h={26}>Sheet 5</SheetTitle>
            <BoxPlot />
            <SheetTitle $x={11}>Sheet 2</SheetTitle>
            <CameraBars />
          </Col>
          <Col $w={220}>
            <SheetTitle $mt={16} $x={7}>Sheet 3</SheetTitle>
            <Treemap />
            <SheetTitle $mt={242} $x={7}>Sheet 4</SheetTitle>
            <TableHead><HeadCell $w={80}>RAM</HeadCell><HeadCell $w={80}>Processor</HeadCell><HeadCell $w={37}>Price</HeadCell></TableHead>
            <TableArea>
              <TableBody>
                {table.map(([ram, procs]) => (
                  <RamGroup key={ram}>
                    <RamCell>{ram}</RamCell>
                    <div>{procs.map(([p, prices], i) => (
                      <ProcGroup key={i}><ProcCell $one={prices.length === 1}>{p}</ProcCell><div>{prices.map(v => <PriceCell key={v}>{v}</PriceCell>)}</div></ProcGroup>
                    ))}</div>
                  </RamGroup>
                ))}
              </TableBody>
              <Bar $w={16} $h={273}><Chevron dir="up" /><Track><Thumb $w={15} $h={18} /></Track><Chevron dir="down" /></Bar>
            </TableArea>
            <HBarWrap><Bar $row $w={196} $h={15}><Chevron dir="left" /><Track $row><Thumb $w={70} $h={15} /></Track><Chevron dir="right" /></Bar></HBarWrap>
          </Col>
          <Col $w={190}>
            <LegendTitle $mt={12}>Rating ?/5</LegendTitle>
            <Ramp $x={8} $w={110} $mt={4} $ls={0.28}>0.00<i />46.20</Ramp>
            <LegendTitle $mt={26}>Back/Rare Camera</LegendTitle>
            <LegendArea>
              <LegendList>{cameras.map(([c, t]) => <LegendRow key={t}><Swatch $c={c} />{t}</LegendRow>)}</LegendList>
              <Bar $w={16} $h={393}><Chevron dir="up" /><Track><Thumb $w={15} $h={41} /></Track><Chevron dir="down" /></Bar>
            </LegendArea>
            <LegendTitle $mt={8} $ls={0.23}>Count of 12_mobile_prices_20..</LegendTitle>
            <Ramp $x={8} $w={139} $mt={4} $ls={0.1}>1<i />377</Ramp>
          </Col>
        </Canvas>
        <Gray>
          <Bar $w={16} $h={849}><Chevron dir="up" /><Track><Thumb $w={15} $h={814} /></Track><Chevron dir="down" /></Bar>
        </Gray>
      </Body>

      <Tabs>
        <Tab $w={131} $pad={9}><svg width={9} height={12} viewBox="0 0 9 12" fill="none" stroke="#666"><ellipse cx={4.5} cy={2.5} rx={3.5} ry={1.8} /><path d="M1 2.500v7q3.500 3 7 0v-7" /></svg>Data Source</Tab>
        <Tab $w={103} $pad={8}>{gridGlyph}Dashboard 1</Tab>
        <Tab $w={55}>Sheet 1</Tab><Tab $w={57}>Sheet 2</Tab><Tab $w={57}>Sheet 3</Tab>
        <Tab $w={104} $pad={7} $on>{gridGlyph}Dashboard 2</Tab>
        <Tab $w={57} $pad={5}>Sheet 4</Tab><Tab $w={57}>Sheet 5</Tab>
        {['M1 1h35v20M1 1v35h18M11 28v-8M18 28V12M25 22v-8', 'M1 1h32v22M1 1v32h20M17 1v32M1 17h32', 'M1 4q9-2 15 2q6-4 16-2v17M1 4v28q9-1 16 2V6'].map((d, i) => (
          <Tab key={i} $w={32} $pad={9}><svg width={16} height={16} viewBox="0 -2 48 48" fill="none" stroke="#555" strokeWidth={3}><path d={d} />{plus(34, 33)}</svg></Tab>
        ))}
      </Tabs>
      <Status>
        <StatusCell $w={127} /><StatusCell $w={27} /><StatusCell $w={27} /><StatusCell $w={47} />
        <StatusCell $w={71}><NavGlyphs>{nav('M2 2h1.500v8H2zM9 2v8L4.500 6z')}{nav('M9 2v8L5 6z')}{nav('M6 2v8L10 6z')}{nav('M9.500 2H11v8H9.500zM4 2v8L8.500 6z')}</NavGlyphs></StatusCell>
        <StatusCell $w={68}>
          <svg width={67} height={20} fill="#b3b3b3">
            {[0, 1, 2].map(r => [0, 1, 2].map(c => <rect key={`${r}${c}`} x={8 + c * 4} y={4 + r * 4} width={3} height={3} />))}
            <rect x={29} y={4} width={11} height={7} />{[0, 1, 2].map(c => <rect key={c} x={29 + c * 4} y={12} width={3} height={3} />)}
            <rect x={50} y={4} width={11} height={11} rx={1} fill="#666" />
          </svg>
        </StatusCell>
      </Status>

      <Taskbar>
        <Start><svg width={16} height={16} viewBox="0 0 16 16" fill="#fff"><path d="M0 2.200l7-.9v6.200H0zM8 1.200l8-1.200v7.500H8zM0 8.500h7v6.200l-7-.9zM8 8.500h8V16l-8-1.200z" /></svg></Start>
        <Search><svg width={17} height={18} viewBox="0 0 17 18" fill="none" stroke="#222" strokeWidth={1.5}><circle cx={10.5} cy={6.5} r={5.5} /><path d="M6.500 10.500L.8 16.500" /></svg>Type here to search</Search>
        <Pinned $w={17} $ml={16}><svg width={17} height={16} fill="none" stroke="#eee" strokeWidth={1.3}><path d="M1 0v3h10V0M1 5.500h10v6H1zM1 16v-3h10v3M15 0v3M15 7v9" /><path d="M13.500 4h3v2.500h-3z" fill="#eee" stroke="none" /></svg></Pinned>
        <Pinned $w={26} $ml={25}>
          <svg width={25} height={25} viewBox="0 0 24 24"><defs><linearGradient id="e1" x1="0" y1="0" x2="1" y2=".4"><stop stopColor="#2aa5e0" /><stop offset="1" stopColor="#62dd6a" /></linearGradient></defs><circle cx={12} cy={12} r={11.5} fill="url(#e1)" /><path d="M.5 12Q2 6 8.500 6.500Q14 7 14 12q0 1-1 2.500q3 3.500 9 2q-4 7-11 6.700Q1 22 .5 12z" fill="#1167b8" /><path d="M8 12q-3 6 3 11.200Q2 22 1 14Q2 8 9 8q4 .5 4 4-1-2-5 0z" fill="#1a86d0" /><path d="M14 12q0 1-1 2.500q4 2.500 8 1t2-5Q20 14 14 12z" fill="#20343f" /></svg>
        </Pinned>
        <Pinned $w={25} $ml={15}><svg width={25} height={25} viewBox="0 0 25 25"><path d="M9 2L22 5L16 23L2 19z" fill="#5fb0c4" /><path d="M9 2L22 5L19 14L6 11z" fill="#a9dfe6" /><path d="M22 5l1.500 2l-6 16l-1.500 0z" fill="#d9d2c0" /><path d="M9 2l13 3" stroke="#eee" strokeWidth={2} /></svg></Pinned>
        <Pinned $w={24} $ml={17}><svg width={24} height={24} viewBox="0 0 24 24"><path d="M2 1h12l5 5v14H2z" fill="#f3f3f3" /><path d="M3.500 1v19" stroke="#777" strokeWidth={2} strokeDasharray="1.500 1" /><path d="M14 9h5q2 0 2 2v4h-7q-2 0-2 3h-2q-1-7 4-6z" fill="#3c78aa" /><path d="M21 13q3 0 3 4t-4 4h-1v2h-6v-3q0-3 3-3h5z" fill="#fbd343" /></svg></Pinned>
        <Pinned $w={70} $ml={15} $run $pad={6}><svg width={18} height={22} viewBox="0 0 18 22" fill="#f37726"><path d="M1 8q8-9 16 0q-8-5-16 0zM1 14q8 9 16 0q-8 5-16 0z" /><circle cx={16} cy={2} r={1.5} fill="#888" /><circle cx={3} cy={20} r={1.5} fill="#888" /></svg>Jupyt...</Pinned>
        <Pinned $w={70} $ml={9} $run $pad={2} $gap={3}>
          <svg width={25} height={25} viewBox="0 0 25 25"><circle cx={11.5} cy={11.5} r={11.5} fill="#fbc116" /><path d="M11.500 11.500L1.500 5.700A11.500 11.500 0 0 1 21.500 6z" fill="#e33b2e" /><path d="M11.500 11.500L1.500 5.700A11.500 11.500 0 0 0 11 23z" fill="#279847" /><circle cx={11.5} cy={11.5} r={5.5} fill="#fff" /><circle cx={11.5} cy={11.5} r={4.3} fill="#4285f4" /><circle cx={17.5} cy={17.5} r={7} fill="#512da8" /><text x={17.5} y={20.5} textAnchor="middle" fontSize={8} fill="#fff" fontFamily={ui}>H</text></svg>Asho...
        </Pinned>
        <Pinned $w={70} $ml={9} $run $pad={5}><svg width={19} height={20} viewBox="0 0 19 20"><path d="M5 0h9v10h5L9.500 20L0 10h5z" fill="#3a9bea" /></svg>Dow...</Pinned>
        <Pinned $w={79} $ml={5} $run $on $pad={6}><AppIcon $s={22}><Spark size={19} colors={tableauBlue} /></AppIcon>Table...</Pinned>
        <Pinned $w={70} $ml={4} $run $pad={2}><AppIcon $s={22}><Spark size={19} colors={tableauBlue} /></AppIcon>Table...</Pinned>
        <Pinned $w={16} $ml={29}><svg width={16} height={16} viewBox="0 0 16 16" fill="none" stroke="#eee" strokeWidth={1.3}><circle cx={10.5} cy={3.5} r={2.7} /><path d="M7 9q3.500-4 7.500 1" /><circle cx={5} cy={8.5} r={2.5} /><path d="M1 15q0-4 4-4t4 4" /></svg></Pinned>
        <Pinned $w={62} $ml={38} $pad={1} $gap={7}><svg width={24} height={18} viewBox="0 0 25 18" fill="none" stroke="#8fb3dc" strokeWidth={2.5} strokeLinecap="round"><circle cx={15} cy={5} r={4} fill="#a9c4e6" stroke="none" /><path d="M1 8h15M2 12h18q3 0 3-2t-3-2M8 12h5q3 4-1 4" /></svg><Weather>32°C</Weather></Pinned>
        <Pinned $w={17} $ml={23}><svg width={17} height={14} viewBox="0 0 17 14"><path d="M4 12q-4-1-3-4t4-3q2-4 6-2t3 4q3 1 2 5z" fill="#9aa3ab" /><path d="M2 1l13 12" stroke="#fff" strokeWidth={1.3} /></svg></Pinned>
        <Pinned $w={17} $ml={7}><svg width={17} height={16} viewBox="0 0 17 16"><path d="M1 5h2.500L7 2v11L3.500 10H1z" fill="none" stroke="#fff" /><circle cx={11.5} cy={11} r={4.8} fill="#d9232e" /><path d="M9.500 9l4 4M13.500 9l-4 4" stroke="#fff" strokeWidth={1.3} /></svg></Pinned>
        <Pinned $w={13} $ml={10}><svg width={13} height={18} viewBox="0 0 13 18" fill="none" stroke="#eee" strokeWidth={1.2}><rect x={1} y={5} width={7} height={8} rx={1} /><path d="M8 8l3-2v6l-3-2M2 2.500q4-3 8 0M2 15.500q4 3 8 0" /></svg></Pinned>
        <Pinned $w={17} $ml={9}><svg width={17} height={16} viewBox="0 0 17 16" fill="none" stroke="#eee" strokeWidth={1.2}><path d="M5.500 2.500H16v8H5.500zM10.500 10.500V14M7 14h7M1 1h4v4H1zM3 5v7h3" /></svg></Pinned>
        <Clock>4:18 PM<br />8/5/2023</Clock>
        <Pinned $w={17} $ml={14}><svg width={17} height={17} viewBox="0 0 17 17" fill="none" stroke="#fff" strokeWidth={1.2}><path d="M1 1h15v12h-5l-2.500 3L6 13H1z" /></svg></Pinned>
        <Peek />
      </Taskbar>

      <Watermark>Activate Windows<small>Go to Settings to activate Windows.</small></Watermark>
      <ShowMe>
        <ShowMeTab>
          <svg width={14} height={15}><rect width={11} height={3} fill="#856a98" /><rect y={4} width={14} height={3} fill="#7fa6cc" /><rect y={8} width={5} height={3} fill="#f4a582" /><rect y={12} width={8} height={3} fill="#f9707e" /></svg>
          Show Me
        </ShowMeTab>
        <ShowMeBody>
          <Thumbs>{thumbs.map((t, i) => <ThumbCell key={i}><svg width={56} height={42} viewBox="0 0 167 125">{t}</svg></ThumbCell>)}</Thumbs>
          <SelectView>Select view</SelectView>
        </ShowMeBody>
      </ShowMe>
    </Window>
  );
}
